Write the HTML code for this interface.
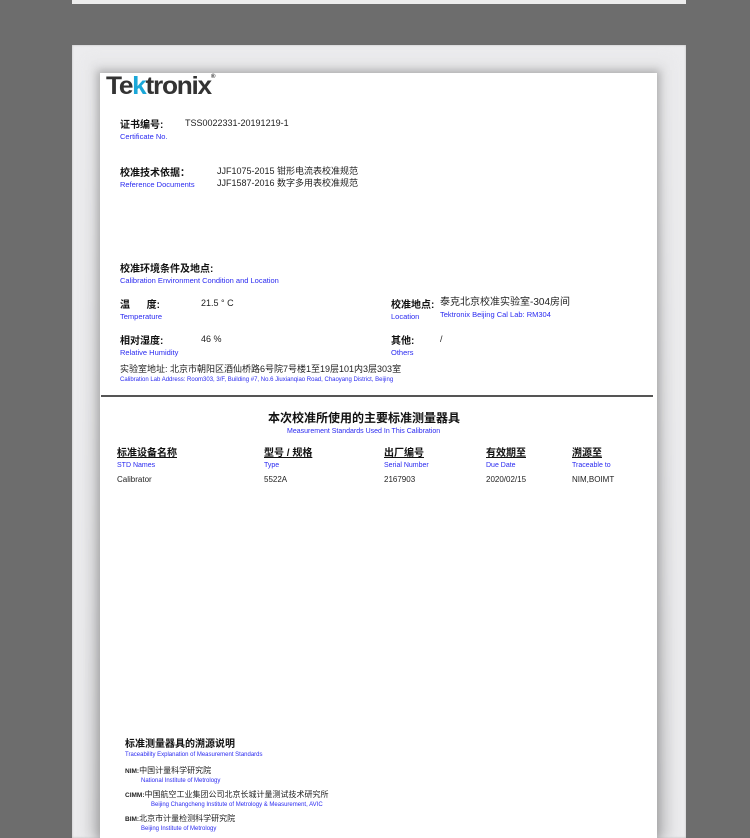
<!DOCTYPE html>
<html><head><meta charset="utf-8"><style>
*{margin:0;padding:0;box-sizing:border-box}
body{width:750px;height:838px;background:#6d6d6d;position:relative;overflow:hidden;font-family:"Liberation Sans","Noto Sans CJK SC",sans-serif;line-height:1.15}
.a{position:absolute;white-space:nowrap}
.cn{font-size:10px;color:#111;font-weight:bold}
.n{font-size:9px;color:#222}
.en{font-size:7.5px;color:#2a2af0}
.s{font-size:6px;color:#2a2af0}
</style></head><body>
<div class="a" style="left:72px;top:0;width:614px;height:4px;background:#ececec"></div>
<div class="a" style="left:72px;top:45px;width:614px;height:793px;background:#ececee;box-shadow:inset 0 0 2px #bbb"></div>
<div class="a" style="left:88px;top:60px;width:582px;height:778px;background:linear-gradient(#e6e6e8,#cfcfd1);filter:blur(6px)"></div>
<div class="a" style="left:100px;top:73px;width:557px;height:765px;background:#fff;box-shadow:0 0 8px 3px rgba(120,120,120,.5)"></div>

<div class="a" style="left:106px;top:74px;font-size:25px;line-height:1;font-weight:bold;color:#333;letter-spacing:-1.2px;transform:scaleX(1.05);transform-origin:left top">Te<span style="color:#1aa7d8">k</span>tronix<span style="font-size:6px;vertical-align:top">®</span></div>

<div class="a cn" style="left:120px;top:120px">证书编号:</div>
<div class="a n" style="left:185px;top:118px">TSS0022331-20191219-1</div>
<div class="a en" style="left:120px;top:133px">Certificate No.</div>

<div class="a cn" style="left:120px;top:168px">校准技术依据：</div>
<div class="a n" style="left:217px;top:166px">JJF1075-2015 钳形电流表校准规范</div>
<div class="a n" style="left:217px;top:178px">JJF1587-2016 数字多用表校准规范</div>
<div class="a en" style="left:120px;top:181px">Reference Documents</div>

<div class="a cn" style="left:120px;top:264px">校准环境条件及地点:</div>
<div class="a en" style="left:120px;top:277px">Calibration Environment Condition and Location</div>

<div class="a cn" style="left:120px;top:300px">温&nbsp;&nbsp;&nbsp;&nbsp;&nbsp;&nbsp;度:</div>
<div class="a n" style="left:201px;top:298px">21.5 ° C</div>
<div class="a en" style="left:120px;top:313px">Temperature</div>
<div class="a cn" style="left:391px;top:300px">校准地点:</div>
<div class="a n" style="left:440px;top:297px;font-size:10px">泰克北京校准实验室-304房间</div>
<div class="a en" style="left:440px;top:311px">Tektronix Beijing Cal Lab: RM304</div>
<div class="a en" style="left:391px;top:313px">Location</div>

<div class="a cn" style="left:120px;top:336px">相对湿度:</div>
<div class="a n" style="left:201px;top:334px">46 %</div>
<div class="a en" style="left:120px;top:349px">Relative Humidity</div>
<div class="a cn" style="left:391px;top:336px">其他:</div>
<div class="a n" style="left:440px;top:334px">/</div>
<div class="a en" style="left:391px;top:349px">Others</div>

<div class="a n" style="left:120px;top:364px">实验室地址: 北京市朝阳区酒仙桥路6号院7号楼1至19层101内3层303室</div>
<div class="a s" style="left:120px;top:377px">Calibration Lab Address: Room303, 3/F, Building #7, No.6 Jiuxianqiao Road, Chaoyang District, Beijing</div>

<div class="a" style="left:101px;top:395px;width:552px;height:1.5px;background:#555"></div>

<div class="a" style="left:268px;top:412px;font-size:12px;font-weight:bold;color:#111">本次校准所使用的主要标准测量器具</div>
<div class="a en" style="left:287px;top:428px;font-size:7px">Measurement Standards Used In This Calibration</div>

<div class="a cn" style="left:117px;top:448px;text-decoration:underline">标准设备名称</div>
<div class="a cn" style="left:264px;top:448px;text-decoration:underline">型号 / 规格</div>
<div class="a cn" style="left:384px;top:448px;text-decoration:underline">出厂编号</div>
<div class="a cn" style="left:486px;top:448px;text-decoration:underline">有效期至</div>
<div class="a cn" style="left:572px;top:448px;text-decoration:underline">溯源至</div>
<div class="a en" style="left:117px;top:462px;font-size:7px">STD Names</div>
<div class="a en" style="left:264px;top:462px;font-size:7px">Type</div>
<div class="a en" style="left:384px;top:462px;font-size:7px">Serial Number</div>
<div class="a en" style="left:486px;top:462px;font-size:7px">Due Date</div>
<div class="a en" style="left:572px;top:462px;font-size:7px">Traceable to</div>
<div class="a n" style="left:117px;top:475px;font-size:8px">Calibrator</div>
<div class="a n" style="left:264px;top:475px;font-size:8px">5522A</div>
<div class="a n" style="left:384px;top:475px;font-size:8px">2167903</div>
<div class="a n" style="left:486px;top:475px;font-size:8px">2020/02/15</div>
<div class="a n" style="left:572px;top:475px;font-size:8px">NIM,BOIMT</div>

<div class="a cn" style="left:125px;top:739px">标准测量器具的溯源说明</div>
<div class="a s" style="left:125px;top:752px">Traceability Explanation of Measurement Standards</div>
<div class="a n" style="left:125px;top:766px;font-size:8px"><b style="font-size:6.5px">NIM:</b>中国计量科学研究院</div>
<div class="a s" style="left:141px;top:778px">National Institute of Metrology</div>
<div class="a n" style="left:125px;top:790px;font-size:8px"><b style="font-size:6.5px">CIMM:</b>中国航空工业集团公司北京长城计量测试技术研究所</div>
<div class="a s" style="left:151px;top:802px">Beijing Changcheng Institute of Metrology &amp; Measurement, AVIC</div>
<div class="a n" style="left:125px;top:814px;font-size:8px"><b style="font-size:6.5px">BIM:</b>北京市计量检测科学研究院</div>
<div class="a s" style="left:141px;top:826px">Beijing Institute of Metrology</div>
</body></html>
